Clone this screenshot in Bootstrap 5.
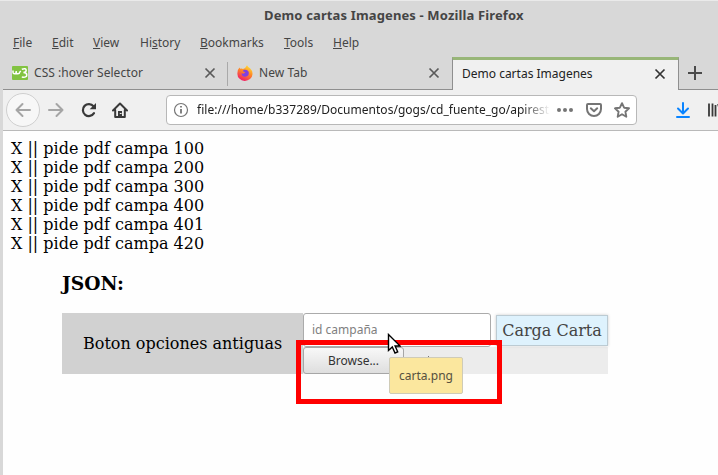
<!DOCTYPE html>
<html lang="es">
<head>
<meta charset="utf-8">
<meta name="viewport" content="width=device-width, initial-scale=1">
<title>Demo cartas Imagenes</title>
<link href="https://cdn.jsdelivr.net/npm/bootstrap@5.3.0/dist/css/bootstrap.min.css" rel="stylesheet">
<style>
body{font-family:"Noto Sans",sans-serif;font-size:12px;line-height:16px;color:#454545;background:#d8d8d8;height:475px}
.win{height:475px;border-top:1px solid #eaeaea;padding-left:3px}
.titlebar{height:28px;font-size:13px;padding-left:261px;letter-spacing:.135px}
.menus{height:28px;padding-left:10px}
.menus span{white-space:nowrap}
.m1{width:39px}.m2{width:41px}.m3{width:47px}.m4{width:60px}.m5{width:84px}.m6{width:49px}
.tabs{height:33px}
.tab{height:33px;border-bottom:1px solid #8f8f8f}
.t1{width:225px;padding-left:9px;padding-right:12px}
.t2{width:224px;padding-left:9px;padding-right:12px}
.vline{width:1px;height:24px;background:#a9a9a9;margin:0 0 0 -1px}
.tl1,.tl2{margin-left:6px;letter-spacing:.05px}
.t3{width:227px;background:#f0f0f0;border:1px solid #8f8f8f;border-bottom:0;border-top:3px solid #98b678;padding:0 12px 3px 9px;color:#222}
.t4{padding-left:8px}
.tools{height:41px;background:#f0f0f0;border-bottom:1px solid #b9b9b9;overflow:hidden}
.back{width:34px;height:34px;border:1px solid #cfcfcf;border-radius:50%;background:#f7f7f7;margin-left:3px}
.ic-fwd{margin-left:8px}.ic-rel{margin-left:17px}.ic-home{margin-left:15px}
.ic-pk{margin-left:12px}.ic-st{margin-left:12px}.ic-dl{margin-left:39px}.ic-lib{margin-left:18px}
.url{width:471px;height:30px;border:1px solid #b8b8b8;border-radius:4px;background:#fff;color:#222;margin-left:38px;padding-left:6px;padding-right:6px}
.addr{width:353px;margin-left:8px;overflow:hidden;white-space:nowrap;letter-spacing:.02px;-webkit-mask-image:linear-gradient(90deg,#000 325px,transparent 353px);mask-image:linear-gradient(90deg,#000 325px,transparent 353px)}
.page{height:344px;background:#fefefe;color:#000;font-family:"DejaVu Serif",serif;font-size:16px;line-height:19px;padding:8px 0 0 8px}
.json{font-size:18.7px;line-height:22px;margin:19px 0 19px 51px}
.panel{width:546px;height:61px;margin-left:51px}
.legend-cell{width:241px;background:#d1d1d1;padding-left:21px}
.field{width:188px;height:34px;border:1px solid #ababab;border-radius:3px;background:#fff;font:12px/16px "Noto Sans",sans-serif;color:#808080;padding-left:8px}
.carga{width:112px;height:31px;border:1px solid #bccbd3;background:#def2fd;color:#444;margin:2px 0 0 5px;box-shadow:0 0 3px #ccc}
.files{height:27px;background:#ececec}
.browse{width:101px;height:27px;border:1px solid #a6a6a6;border-radius:3px;background:linear-gradient(#f8f8f8,#dedede);font:12px/16px "Noto Sans",sans-serif;color:#333}
.redbox{left:296px;top:340px;width:206px;height:64px;border:5px solid #f00}
.tip{left:389px;top:357px;width:74px;height:37px;border:1px solid #cfcbb7;border-radius:2px;background:#fbe79e;color:#56513e}
.pointer{left:387px;top:333px}
.speck{left:428px;top:356px;width:1px;height:1px;background:#777}
</style>
<script src="https://cdn.jsdelivr.net/npm/bootstrap@5.3.0/dist/js/bootstrap.bundle.min.js"></script>
</head>
<body class="overflow-hidden position-relative">
<div class="win">
  <div class="titlebar d-flex align-items-center fw-bold"><span>Demo cartas Imagenes - Mozilla Firefox</span></div>
  <div class="menus d-flex align-items-center">
    <span class="m1"><u>F</u>ile</span><span class="m2"><u>E</u>dit</span><span class="m3"><u>V</u>iew</span><span class="m4">Hi<u>s</u>tory</span><span class="m5"><u>B</u>ookmarks</span><span class="m6"><u>T</u>ools</span><span><u>H</u>elp</span>
  </div>
  <div class="tabs d-flex">
    <div class="tab t1 d-flex align-items-center">
      <svg width="16" height="14" viewBox="0 0 16 14"><rect width="16" height="14" rx="1" fill="#82c341"/><path d="M1 4.500v1.700q0 1.600 1.500 1.600T4.200 6.200V5M4.200 6.200q0 1.600 1.700 1.600T7.600 6.200L8.800 5M9.800 3.200q4.400-1.400 4.400 1 0 2-2.800 2.200 3.400 0 3.400 2.500 0 3-5 2" fill="none" stroke="#fff" stroke-width="1.500"/></svg>
      <span class="tl1">CSS :hover Selector</span>
      <svg class="ms-auto" width="12" height="12" viewBox="0 0 12 12" stroke="#5a5a5a" stroke-width="1.700"><path d="M1.500 1.500l9 9M10.500 1.500l-9 9"/></svg>
    </div>
    <div class="vline align-self-center"></div>
    <div class="tab t2 d-flex align-items-center">
      <svg width="16" height="16" viewBox="0 0 16 16"><defs><linearGradient id="fx" x1=".8" y1="0" x2=".3" y2="1"><stop offset="0" stop-color="#ffe838"/><stop offset=".45" stop-color="#ff8a24"/><stop offset="1" stop-color="#f0176b"/></linearGradient></defs><path d="M10 .2q1 1.800 3 3 2.800 2.600 2.500 6A7.500 7 0 0 1 .4 8.500Q.3 4.500 2.500 2.400l.7 1.400q1.500-.5 2.800.1Q8.800 3 10 .2z" fill="url(#fx)"/><path d="M7 4.800q4-.6 4.800 2.700.3 4-3.600 4.200-3.700-.2-3.600-3.500l1.800.6 2-1.600q-1.800-.2-2.700-1.200z" fill="#8040e0"/></svg>
      <span class="tl2">New Tab</span>
      <svg class="ms-auto" width="12" height="12" viewBox="0 0 12 12" stroke="#5a5a5a" stroke-width="1.700"><path d="M1.500 1.500l9 9M10.500 1.500l-9 9"/></svg>
    </div>
    <div class="t3 d-flex align-items-center">
      <span>Demo cartas Imagenes</span>
      <svg class="ms-auto" width="12" height="12" viewBox="0 0 12 12" stroke="#333" stroke-width="1.700"><path d="M1.500 1.500l9 9M10.500 1.500l-9 9"/></svg>
    </div>
    <div class="tab t4 d-flex align-items-center flex-fill"><svg width="16" height="16" viewBox="0 0 16 16" stroke="#4a4a4a" stroke-width="2"><path d="M8 1v14M1 8h14"/></svg></div>
  </div>
  <div class="tools d-flex align-items-center">
    <div class="back d-flex align-items-center justify-content-center flex-shrink-0"><svg width="16" height="16" viewBox="0 0 16 16" fill="none" stroke="#a5a5a5" stroke-width="2" stroke-linecap="round" stroke-linejoin="round"><path d="M15 8H1.500M7.500 2l-6 6 6 6"/></svg></div>
    <svg class="flex-shrink-0 ic-fwd" width="16" height="16" viewBox="0 0 16 16" fill="none" stroke="#a5a5a5" stroke-width="2" stroke-linecap="round" stroke-linejoin="round"><path d="M1 8h13.500M8.500 2l6 6-6 6"/></svg>
    <svg class="flex-shrink-0 ic-rel" width="16" height="16" viewBox="0 0 16 16"><path d="M12.500 4.200A6 6 0 1 0 13 11.200" fill="none" stroke="#393939" stroke-width="2.200" stroke-linecap="round"/><path d="M15 1v6.300H8.700z" fill="#393939"/></svg>
    <svg class="flex-shrink-0 ic-home" width="16" height="16" viewBox="0 0 16 16" fill="none" stroke="#393939" stroke-width="2" stroke-linecap="round" stroke-linejoin="round"><path d="M1 8.500L8 1.500l7 7M3.200 8v7h9.600V8"/><path d="M6 15V9h4v6z" fill="#393939" stroke="none"/><path d="M8.200 11.500h1" stroke="#eee" stroke-width="1"/></svg>
    <div class="url d-flex align-items-center flex-shrink-0">
      <svg class="flex-shrink-0" width="16" height="16" viewBox="0 0 16 16" fill="none" stroke="#757575"><circle cx="8" cy="8" r="6.500" stroke-width="1.200"/><path d="M8 7v4.500M8 4v1.500" stroke-width="1.800"/></svg>
      <div class="addr flex-shrink-0">file:///home/b337289/Documentos/gogs/cd_fuente_go/apirest2</div>
      <svg class="ms-auto flex-shrink-0" width="18" height="16" viewBox="0 0 18 16" fill="#757575"><circle cx="3" cy="8" r="2"/><circle cx="9" cy="8" r="2"/><circle cx="15" cy="8" r="2"/></svg>
      <svg class="ic-pk flex-shrink-0" width="16" height="16" viewBox="0 0 16 16" fill="none" stroke="#757575" stroke-width="2" stroke-linecap="round" stroke-linejoin="round"><path d="M2 2h12q1 0 1 1v4a7 7 0 0 1-14 0V3q0-1 1-1zM4.800 6.300L8 9.200l3.200-2.900"/></svg>
      <svg class="ic-st flex-shrink-0" width="16" height="16" viewBox="0 0 16 16" fill="none" stroke="#757575" stroke-width="1.900" stroke-linejoin="round"><path d="M8 1.200l2.100 4.500 4.900.6-3.600 3.400.9 5L8 12.200l-4.300 2.500.9-5L1 6.300l4.900-.6z"/></svg>
    </div>
    <svg class="flex-shrink-0 ic-dl" width="14" height="16" viewBox="0 0 14 16" fill="none" stroke="#0a84ff" stroke-width="2" stroke-linecap="round" stroke-linejoin="round"><path d="M7 1v10M2 6.500l5 5 5-5M1 15h12"/></svg>
    <svg class="flex-shrink-0 ic-lib" width="16" height="16" viewBox="0 0 16 16" stroke="#393939" stroke-width="1.800"><path d="M1 1.500v13M4.500 1.500v13M7.500 3v11.500M10 2l4 12.500"/></svg>
  </div>
  <div class="page">
    <div>X || pide pdf campa 100</div>
    <div>X || pide pdf campa 200</div>
    <div>X || pide pdf campa 300</div>
    <div>X || pide pdf campa 400</div>
    <div>X || pide pdf campa 401</div>
    <div>X || pide pdf campa 420</div>
    <h3 class="json fw-bold">JSON:</h3>
    <div class="panel d-flex">
      <div class="legend-cell d-flex align-items-center flex-shrink-0">Boton opciones antiguas</div>
      <div class="flex-fill">
        <div class="d-flex"><div class="field d-flex align-items-center">id campaña</div><div class="carga d-flex align-items-center justify-content-center">Carga Carta</div></div>
        <div class="files"><div class="browse d-flex align-items-center justify-content-center">Browse...</div></div>
      </div>
    </div>
  </div>
</div>
<div class="redbox position-absolute"></div>
<div class="speck position-absolute"></div>
<div class="tip position-absolute d-flex align-items-center justify-content-center">carta.png</div>
<svg class="pointer position-absolute" width="14" height="22" viewBox="0 0 14 22"><path d="M1.500 1.500v16l3.800-3.500 2.700 6 2.700-1.200-2.600-5.800h5z" fill="#fff" stroke="#000" stroke-width="1.400"/></svg>
</body>
</html>
